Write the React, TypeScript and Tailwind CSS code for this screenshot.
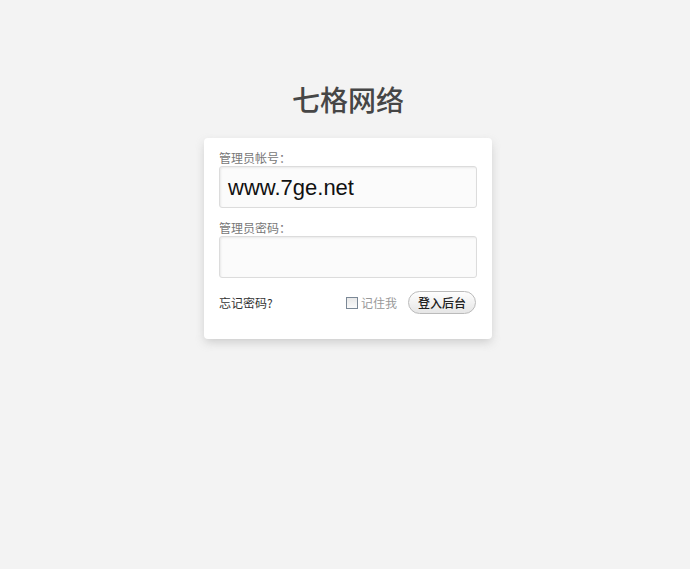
import React from "react";

export default function App() {
  return (
    <div className="min-h-[569px] w-full bg-[#f3f3f3] pt-[85px] pl-[6px]" style={{ fontFamily: '"Liberation Sans", "Noto Sans CJK SC", sans-serif' }}>
      <div className="mx-auto w-[288px]">
        <h1 className="text-center text-[28px] leading-[28px] font-medium text-[#464646] mb-[25px]" style={{ fontFamily: '"Noto Sans CJK SC", sans-serif' }}>
          七格网络
        </h1>
        <div className="bg-white rounded-[4px] shadow-[0_4px_10px_-1px_rgba(190,190,190,0.75)] px-[15px] pt-[13px] pb-[25px]">
          <label className="block text-[12px] leading-[14px] text-[#777]" style={{ fontFamily: '"Noto Sans CJK SC", sans-serif' }}>
            管理员帐号：
          </label>
          <div className="mt-[1px] h-[42px] w-full rounded-[3px] border border-[#dcdcdc] bg-[#fbfbfb] shadow-[inset_1px_1px_2px_rgba(200,200,200,0.35)] flex items-center pl-[8px] text-[22px] text-[#111]" style={{ fontFamily: '"Liberation Sans", Arial, sans-serif' }}>
            www.7ge.net
          </div>
          <label className="block mt-[13px] text-[12px] leading-[14px] text-[#777]" style={{ fontFamily: '"Noto Sans CJK SC", sans-serif' }}>
            管理员密码：
          </label>
          <div className="mt-[1px] h-[42px] w-full rounded-[3px] border border-[#dcdcdc] bg-[#fbfbfb] shadow-[inset_1px_1px_2px_rgba(200,200,200,0.35)]" />
          <div className="mt-[13px] flex items-center h-[23px]" style={{ fontFamily: '"Noto Sans CJK SC", sans-serif' }}>
            <span className="text-[12px] text-[#333]">忘记密码?</span>
            <div className="ml-auto flex items-center">
              <span className="w-[12px] h-[12px] border border-[#7b8896] bg-gradient-to-b from-[#e8e8e8] to-[#fafafa] mt-[1px]" />
              <span className="ml-[3px] text-[12px] text-[#999]">记住我</span>
            </div>
            <button className="ml-[11px] mr-[1px] h-[23px] px-[9px] rounded-full border border-[#bbb] bg-gradient-to-b from-[#fefefe] to-[#e6e6e6] text-[12px] font-medium text-[#222] leading-none">
              登入后台
            </button>
          </div>
        </div>
      </div>
    </div>
  );
}
